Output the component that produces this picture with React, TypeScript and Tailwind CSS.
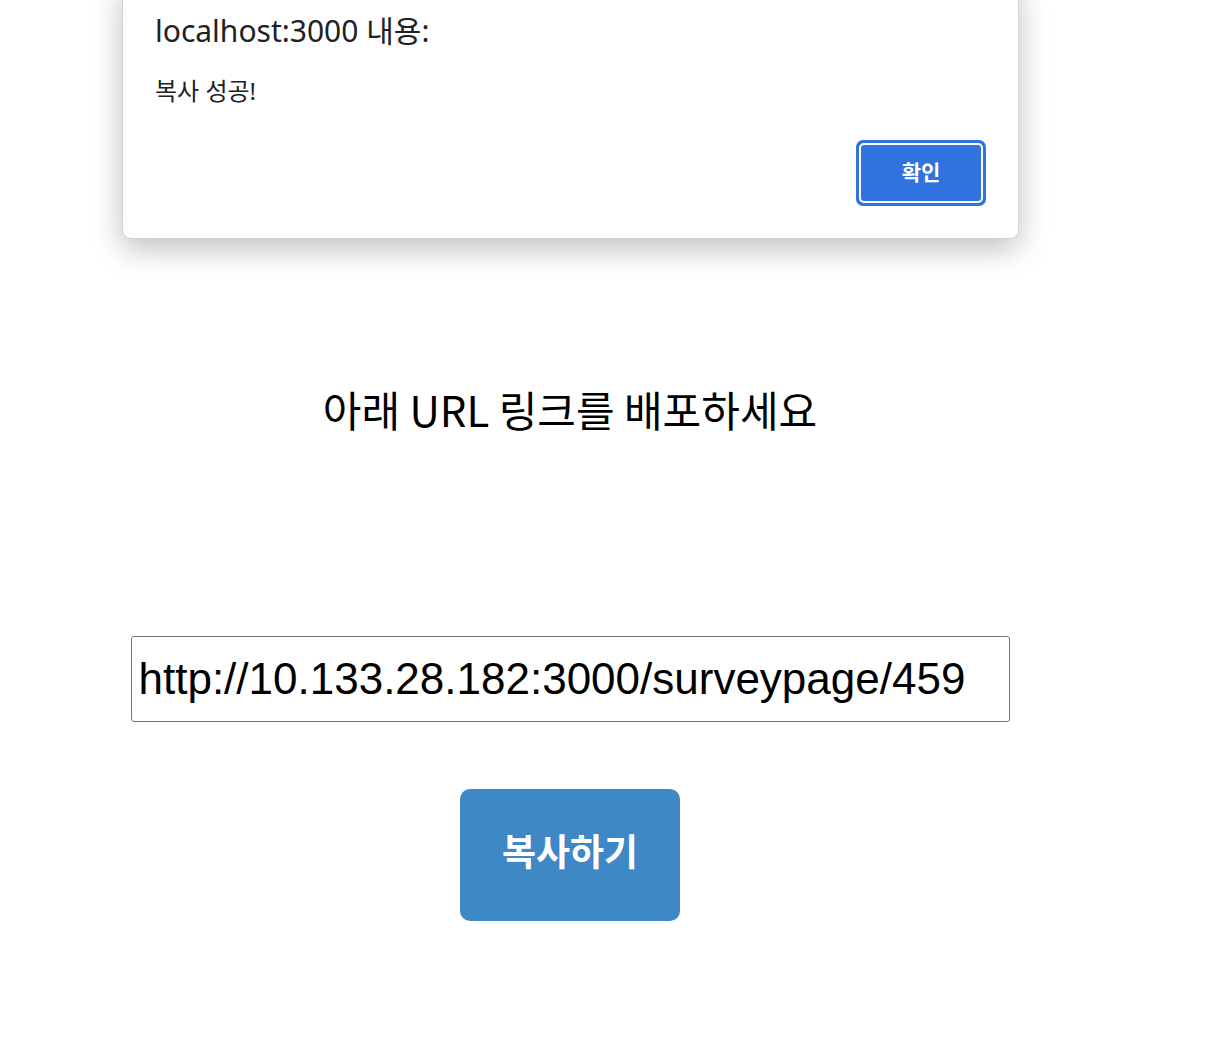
import React from "react";

export default function App() {
  return (
    <div className="relative min-h-[1044px] w-[1220px] bg-white" style={{ fontFamily: '"Noto Sans", "Noto Sans CJK KR", sans-serif' }}>
      {/* main content */}
      <div className="flex w-[1140px] flex-col items-center pt-[380px]">
        <h1 className="text-[42px] leading-[58px] font-normal text-black" style={{ fontFamily: '"Noto Sans CJK KR", sans-serif' }}>
          아래 URL 링크를 배포하세요
        </h1>
        <input
          readOnly
          value="http://10.133.28.182:3000/surveypage/459"
          className="mt-[198px] h-[86px] w-[879px] rounded-[3px] border border-[#767676] pl-[7px] pr-[8px] text-[44px] text-black outline-none"
          style={{ fontFamily: '"Liberation Sans", Arial, sans-serif' }}
        />
        <button
          className="mt-[67px] flex h-[132px] w-[220px] items-center justify-center rounded-[10px] bg-[#3d88c5] pb-[8px] text-[37px] font-bold text-white"
          style={{ fontFamily: '"Noto Sans CJK KR", sans-serif' }}
        >
          복사하기
        </button>
      </div>

      {/* alert dialog overlay */}
      <div className="absolute left-[122px] top-[-20px] h-[259px] w-[897px] rounded-[9px] border border-[#d4d4d4] bg-white shadow-[0_10px_30px_rgba(0,0,0,0.25)]">
        <div className="flex h-full flex-col px-[32px] pt-[29px]">
          <div className="text-[30px] leading-[42px] text-[#202124]">localhost:3000 내용:</div>
          <div className="mt-[22px] text-[24px] leading-[34px] text-[#202124]">복사 성공!</div>
          <div className="mt-[32px] flex justify-end">
            <div className="rounded-[7px] bg-[#3173de] p-[3px]">
              <div className="flex h-[60px] w-[124px] items-center justify-center rounded-[5px] border-2 border-white bg-[#3173de] text-[21px] font-bold text-white">
                확인
              </div>
            </div>
          </div>
        </div>
      </div>
    </div>
  );
}
